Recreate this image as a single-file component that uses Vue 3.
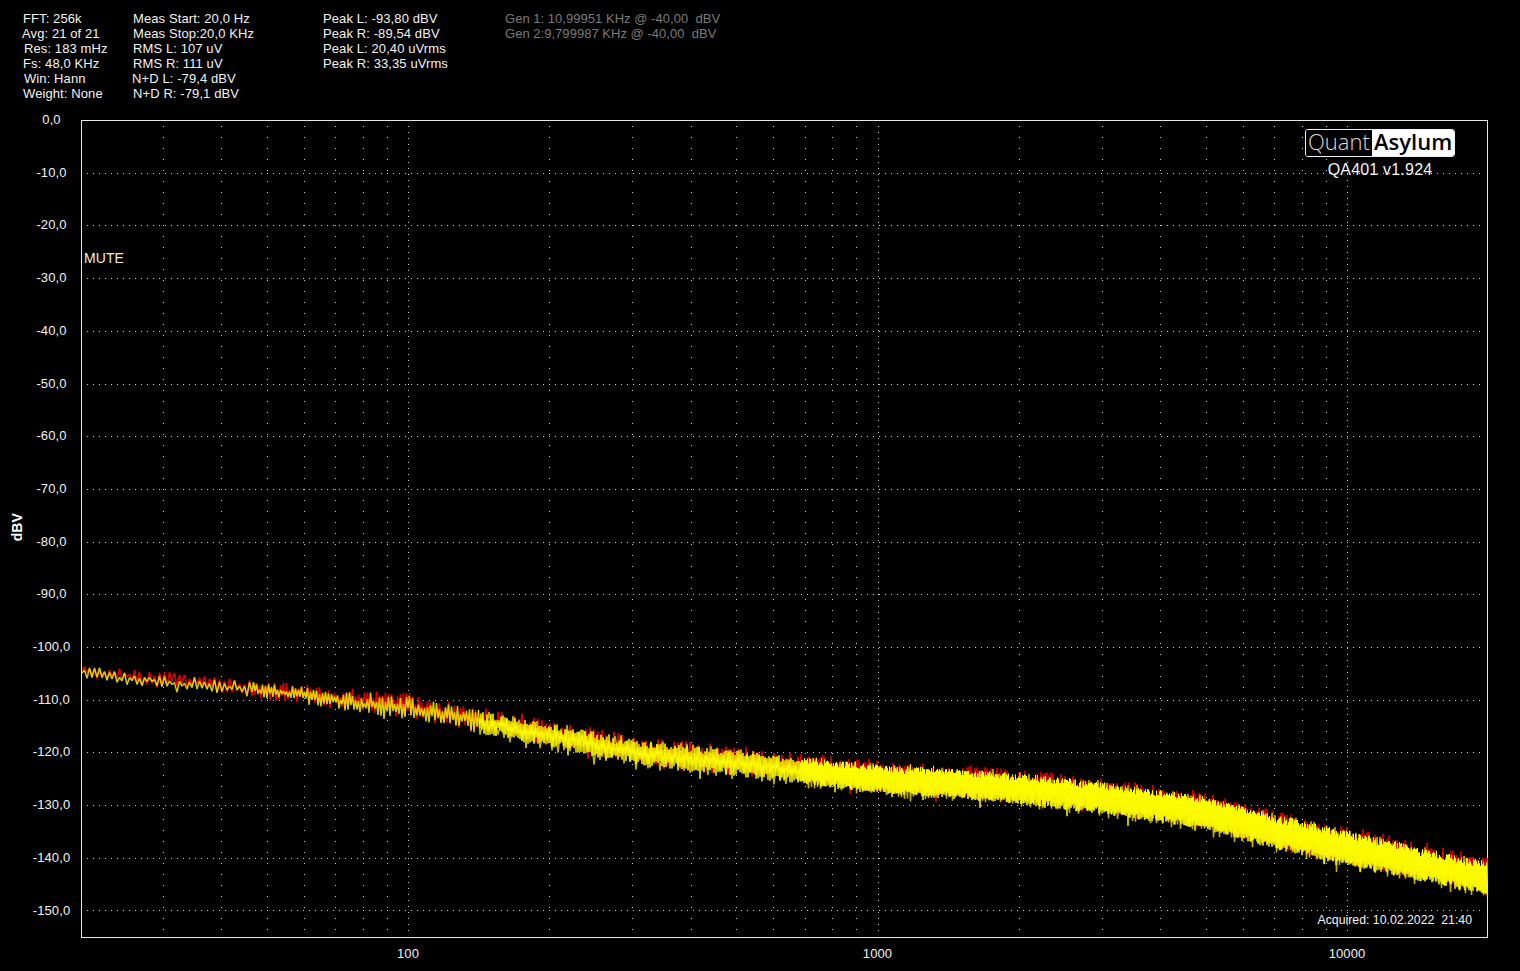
<script setup>
const statCols = [
  { cls: 'c1', rows: [['FFT: 256k', 1], ['Avg: 21 of 21', 0], ['Res: 183 mHz', 2], ['Fs: 48,0 KHz', 1], ['Win: Hann', 2], ['Weight: None', 1]] },
  { cls: 'c2', rows: [['Meas Start: 20,0 Hz', 1], ['Meas Stop:20,0 KHz', 1], ['RMS L: 107 uV', 1], ['RMS R: 111 uV', 1], ['N+D L: -79,4 dBV', 0], ['N+D R: -79,1 dBV', 1]] },
  { cls: 'c3', rows: [['Peak L: -93,80 dBV', 0], ['Peak R: -89,54 dBV', 0], ['Peak L: 20,40 uVrms', 0], ['Peak R: 33,35 uVrms', 0]] },
  { cls: 'c4', rows: [['Gen 1: 10,99951 KHz @ -40,00  dBV', 0], ['Gen 2:9,799987 KHz @ -40,00  dBV', 0]] }
]
const acquired = 'Acquired: 10.02.2022  21:40'

const X100 = 408
const DEC = 469.5
const fx = (f) => X100 + DEC * (Math.log10(f) - 2)
const dbY = (d) => 120 + (-d) * 5.27

const yTicks = []
for (let d = 0; d >= -150; d -= 10) yTicks.push({ label: (d === 0 ? '0,0' : d + ',0'), top: dbY(d) - 120 })
const xTicks = [100, 1000, 10000].map((f) => ({ label: String(f), left: fx(f) - 81 }))

const hLines = yTicks.slice(1).map((t) => Math.round(t.top + 120) + 0.5)
const minor = []
const major = [100, 1000, 10000].map((f) => Math.round(fx(f)) + 0.5)
for (const base of [10, 100, 1000, 10000]) {
  for (let m = 2; m <= 9; m++) {
    const f = base * m
    if (f > 20 && f < 20000) minor.push(Math.round(fx(f)) + 0.5)
  }
}

function rng(seed) {
  let a = seed
  return () => {
    a |= 0; a = (a + 0x6d2b79f5) | 0
    let t = Math.imul(a ^ (a >>> 15), 1 | a)
    t = (t + Math.imul(t ^ (t >>> 7), 61 | t)) ^ t
    return ((t ^ (t >>> 14)) >>> 0) / 4294967296
  }
}
const curve = [[81, 673, 6.5], [250, 690, 9], [408, 708, 12.5], [640, 753, 14.5], [878, 779, 16], [1000, 787, 17], [1100, 798, 18], [1200, 812, 18.5], [1280, 833, 19.5], [1347, 848, 20], [1488, 879, 19]]
function at(x) {
  for (let i = 1; i < curve.length; i++) {
    if (x <= curve[i][0]) {
      const [x0, y0, h0] = curve[i - 1]
      const [x1, y1, h1] = curve[i]
      const t = (x - x0) / (x1 - x0)
      return [y0 + (y1 - y0) * t, h0 + (h1 - h0) * t]
    }
  }
  return [879, 19]
}
function trace(seed, shift, gain, spikeRate, stepMul = 1, solidFloor = 0.5) {
  const r = rng(seed)
  let low = ''
  let high = ''
  let s = 1
  let x = 82
  let slow = 0
  while (x < 1487.5) {
    const [c, h] = at(x)
    slow = slow * 0.8 + (r() - 0.5) * (x < 500 ? 2.2 : 0.8)
    const floor = x < 400 ? 0.05 + (x / 400) * 0.1 : x < 800 ? 0.15 + ((x - 400) / 400) * (solidFloor - 0.15) : solidFloor
    const mag = floor + (1 - floor) * Math.pow(r(), x < 500 ? 1 : 0.7)
    let y = c + shift + slow + s * h * gain * mag
    if (s > 0 && r() < spikeRate) y += r() * 8
    if (s < 0 && r() < spikeRate * 0.5) y -= r() * 4
    s = -s
    const pt = x.toFixed(1) + ' ' + y.toFixed(1)
    if (x < 480) {
      low += (low ? 'L' : 'M') + pt
    } else {
      if (!high) high = low.slice(low.lastIndexOf('L')).replace('L', 'M')
      high += 'L' + pt
    }
    x += (x < 250 ? 2.5 : x < 480 ? 1.5 : x < 800 ? 1 : 0.5) * (x < 480 ? 1 : stepMul)
  }
  return { low, high }
}
const red = trace(7, -2.5, 1.0, 0.06, 2, 0.1)
const olive = trace(41, 1, 1.04, 0.08, 3, 0.1)
const yellow = trace(23, 0, 0.88, 0.03)
</script>

<template>
  <div class="page">
    <header class="stats">
      <div v-for="col in statCols" :key="col.cls" class="col" :class="col.cls">
        <div v-for="row in col.rows" :key="row[0]" class="stat" :style="{ paddingLeft: row[1] + 'px' }">{{ row[0] }}</div>
      </div>
    </header>

    <main class="chart">
      <div class="y-axis">
        <span class="y-title">dBV</span>
        <span v-for="t in yTicks" :key="t.label" class="y-tick" :style="{ top: t.top + 'px' }">{{ t.label }}</span>
      </div>
      <div class="plot">
        <svg class="plot-svg" viewBox="82 121 1406 817" width="1406" height="817">
          <g class="grid">
            <path v-for="y in hLines" :key="'h' + y" class="dots-h" :d="`M87 ${y}H1482`" />
            <path v-for="x in minor" :key="'m' + x" class="dots-minor" :d="`M${x} 126V933`" />
            <path v-for="x in major" :key="'M' + x" class="dots-major" :d="`M${x} 126V933`" />
          </g>
          <path class="trace thick red" :d="red.low" />
          <path class="trace thick red" :d="red.high" />
          <path class="trace thick olive" :d="olive.high" />
          <path class="trace thick yellow-low" :d="yellow.low" />
          <path class="trace yellow" :d="yellow.high" />
        </svg>
        <div class="mute">MUTE</div>
        <div class="brand">
          <div class="logo"><span class="quant">Quant</span><span class="asylum">Asylum</span></div>
          <div class="version">QA401 v1.924</div>
        </div>
        <div class="acquired">{{ acquired }}</div>
      </div>
    </main>

    <footer class="x-axis">
      <span v-for="t in xTicks" :key="t.label" class="x-tick" :style="{ left: t.left + 'px' }">{{ t.label }}</span>
    </footer>
  </div>
</template>

<style>
html, body { margin: 0; background: #000; }
</style>

<style scoped>
.page {
  width: 1520px;
  height: 971px;
  overflow: hidden;
  background: #000;
  color: #f2f2f2;
  font-family: "Liberation Sans", Arial, sans-serif;
  font-size: 13px;
  line-height: 15px;
  letter-spacing: 0.1px;
}
.stats {
  display: flex;
  height: 120px;
  box-sizing: border-box;
  padding: 11px 0 0 22px;
}
.col { flex: none; }
.c1 { width: 110px; }
.c2 { width: 191px; }
.c3 { width: 182px; }
.c4 { color: #7a7a7a; letter-spacing: 0.03px; }
.stat { white-space: pre; }
.chart {
  display: flex;
  height: 818px;
}
.y-axis {
  position: relative;
  width: 81px;
  flex: none;
}
.y-title {
  position: absolute;
  left: 10px;
  top: 393px;
  writing-mode: vertical-rl;
  transform: rotate(180deg);
  font-weight: 700;
  font-size: 14px;
  line-height: 15px;
  color: #fff;
}
.y-tick {
  position: absolute;
  left: 0;
  width: 103px;
  margin-top: -8px;
  text-align: center;
}
.plot {
  position: relative;
  width: 1407px;
  height: 818px;
  box-sizing: border-box;
  border: 1px solid #e6e6e6;
}
.plot-svg {
  display: block;
}
.grid path {
  fill: none;
  stroke: #c8c8c8;
  stroke-width: 1;
  shape-rendering: crispEdges;
}
.dots-h { stroke-dasharray: 1 5; }
.dots-minor { stroke-dasharray: 1 10; }
.dots-major { stroke-dasharray: 1 5; }
.trace {
  fill: none;
  stroke-width: 1;
  stroke-linejoin: bevel;
}
.thick { stroke-width: 1.5; }
.red { stroke: #e00000; }
.olive { stroke: #c4b000; }
.yellow-low { stroke: #f0e800; stroke-opacity: 0.88; }
.yellow { stroke: #ffff00; }
.mute {
  position: absolute;
  left: 2px;
  top: 130px;
  font-size: 14px;
  color: #f5e9d8;
}
.brand {
  position: absolute;
  top: 8px;
  right: 32px;
  display: flex;
  flex-direction: column;
  align-items: center;
}
.logo {
  display: flex;
  width: 150px;
  height: 28px;
  box-sizing: border-box;
  border: 1px solid #f0f0f0;
  border-radius: 3px;
  font-family: "Open Sans", sans-serif;
  font-size: 22px;
  line-height: 22px;
  letter-spacing: 0;
}
.quant {
  width: 66px;
  flex: none;
  padding-left: 2px;
  box-sizing: border-box;
  background: #000;
  color: #d8d8d8;
  font-weight: 300;
  border-radius: 2px 0 0 2px;
}
.asylum {
  flex: 1;
  background: #fff;
  color: #000;
  font-weight: 600;
  padding-left: 2px;
  border-radius: 0 2px 2px 0;
}
.version {
  margin-top: 4px;
  font-size: 16px;
  line-height: 18px;
  letter-spacing: 0.2px;
  color: #f4f4f4;
}
.acquired {
  position: absolute;
  right: 15px;
  bottom: 9px;
  white-space: pre;
  font-size: 12.3px;
  letter-spacing: 0;
}
.x-axis {
  position: relative;
  margin-left: 81px;
  height: 33px;
}
.x-tick {
  position: absolute;
  top: 8px;
  transform: translateX(-50%);
}
</style>
